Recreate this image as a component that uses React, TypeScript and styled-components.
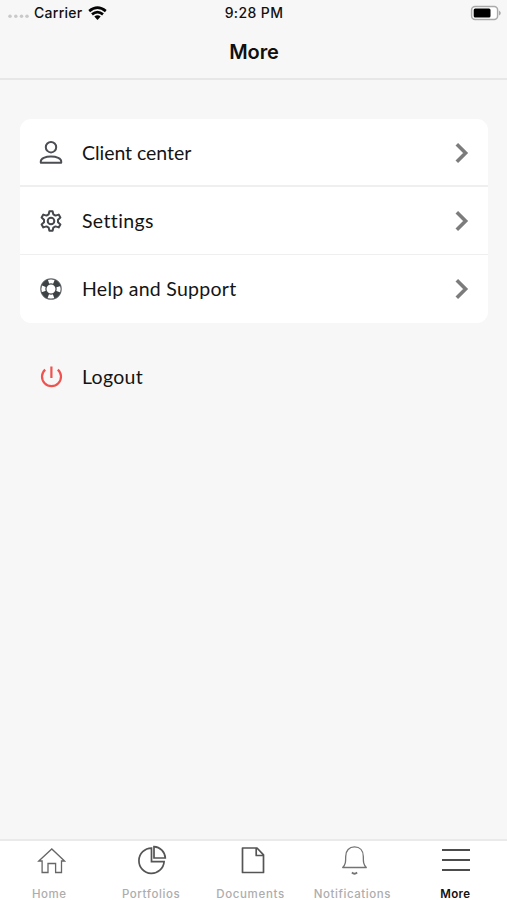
import React from 'react';
import styled, { createGlobalStyle } from 'styled-components';

const GlobalStyle = createGlobalStyle`
  * { box-sizing: border-box; }
  body { margin: 0; background: #f7f7f7; }
`;

const Screen = styled.div`
  width: 100%;
  max-width: 507px;
  height: 900px;
  display: flex;
  flex-direction: column;
  background: #f7f7f7;
  color: #111;
  font-family: Inter, sans-serif;
  overflow: hidden;
`;

const Header = styled.header`
  height: 80px;
  flex: none;
  border-bottom: 2px solid #e7e7e7;
`;

const StatusBar = styled.div`
  height: 26px;
  display: grid;
  grid-template-columns: 1fr auto 1fr;
  align-items: center;
  padding: 0 6px 0 8px;
  font-size: 14px;
  font-weight: 500;
  line-height: 26px;
`;

const Carrier = styled.div`
  display: flex;
  align-items: center;
  svg { display: block; }
`;

const CarrierName = styled.span`
  margin: 0 5px 0 5px;
  letter-spacing: 0.28px;
`;

const Time = styled.span`
  letter-spacing: 0.38px;
  margin-right: 1px;
`;

const Battery = styled.svg`
  justify-self: end;
  display: block;
`;

const Title = styled.h1`
  margin: 0;
  height: 52px;
  line-height: 53px;
  text-align: center;
  font-size: 20px;
  font-weight: 600;
  letter-spacing: -0.1px;
  padding-left: 1px;
  color: #101010;
`;

const Content = styled.main`
  flex: 1;
  padding: 39px 19px 0 20px;
`;

const Card = styled.div`
  border-radius: 11px;
  background: #fff;
  overflow: hidden;
`;

const Row = styled.div<{ $divider?: number }>`
  height: 68px;
  display: flex;
  align-items: center;
  padding: 0 18px;
  box-shadow: inset 0 -${(p) => p.$divider ?? 0}px #efefef;
  svg { display: block; flex: none; }
`;

const RowLabel = styled.span<{ $spacing: number }>`
  flex: 1;
  margin-left: 18px;
  font-family: Lato, sans-serif;
  font-size: 19.5px;
  line-height: 28px;
  letter-spacing: ${(p) => p.$spacing}px;
  color: #141414;
`;

const LogoutRow = styled(Row)`
  margin-top: 20px;
`;

const TabBar = styled.nav`
  height: 61px;
  flex: none;
  display: grid;
  grid-template-columns: repeat(5, 1fr);
  border-top: 2px solid #eaeaea;
  background: #fff;
`;

const Tab = styled.div`
  display: flex;
  flex-direction: column;
  align-items: center;
  svg { display: block; margin-top: 3px; }
`;

const TabLabel = styled.span<{ $active?: boolean; $spacing: number; $shift: number }>`
  margin-top: 10px;
  padding-right: ${(p) => p.$shift}px;
  font-size: 11.5px;
  line-height: 16px;
  font-weight: ${(p) => (p.$active ? 600 : 500)};
  letter-spacing: ${(p) => p.$spacing}px;
  color: ${(p) => (p.$active ? '#111' : '#adadad')};
`;

const SignalDots = () => (
  <svg width="21" height="10" viewBox="0 0 21 10" fill="#c9c9c9">
    {[2, 7.8, 13.5, 19].map((x) => <circle key={x} cx={x} cy="8.25" r="1.75" />)}
  </svg>
);

const Wifi = () => (
  <svg width="19" height="15" viewBox="0 0 19 15" fill="none" stroke="#050505" strokeWidth="2.7">
    <path d="M1.2 5.1Q9.5-1.7 17.8 5.1" />
    <path d="M4 8.4Q9.5 3.9 15 8.4" />
    <path d="M6.3 10.5Q9.5 8 12.7 10.5L9.5 14Z" fill="#050505" stroke="none" />
  </svg>
);

const UserIcon = () => (
  <svg width="26" height="26" viewBox="0 0 26 26" fill="none" stroke="#4b4e52" strokeWidth="2">
    <circle cx="13" cy="7.2" r="5.2" />
    <path d="M2.8 22.8v-1.5c0-2.700 4.500-4.700 10.200-4.700s10.200 2 10.200 4.700v1.500Z" strokeLinejoin="round" />
  </svg>
);

const GearIcon = () => (
  <svg width="26" height="26" viewBox="0 0 26 26" fill="none" stroke="#44484c" strokeWidth="2" strokeLinejoin="round">
    <path d="M11.4 3.2h3.2l.7 3.1 2.2 1.3 3.2-1 1.7 2.9-2.4 2.2v2.6l2.4 2.2-1.7 2.9-3.2-1-2.2 1.3-.7 3.1h-3.2l-.7-3.1-2.2-1.3-3.2 1-1.7-2.9L6 14.3v-2.6L3.6 9.5l1.7-2.9 3.2 1 2.2-1.3Z" />
    <circle cx="13" cy="13" r="3.3" />
  </svg>
);

const SupportIcon = () => (
  <svg width="26" height="26" viewBox="0 0 26 26" fill="none">
    <circle cx="13" cy="13" r="10.2" stroke="#666b6e" strokeWidth="1.2" />
    <circle cx="13" cy="13" r="7.6" stroke="#3d4245" strokeWidth="5" strokeDasharray="6.6 5.338" strokeDashoffset="-2.669" />
    <circle cx="13" cy="13" r="5.1" stroke="#3d4245" strokeWidth="1.2" />
  </svg>
);

const PowerIcon = () => (
  <svg width="26" height="26" viewBox="0 0 26 26" fill="none" stroke="#f0524f" strokeWidth="2.2">
    <path d="M7.2 5.6a9.5 9.5 0 1 0 12.6 0M13.4 2.5v11.5" />
  </svg>
);

const Chevron = () => (
  <svg width="17" height="24" viewBox="0 0 17 24" fill="none" stroke="#7c7c7c" strokeWidth="3.6">
    <path d="m3.8 3.2 8.8 8.8-8.8 8.8" />
  </svg>
);

const HomeIcon = () => (
  <svg width="30" height="32" viewBox="0 0 30 32" fill="none" stroke="#666" strokeWidth="1.3">
    <path d="M2.8 17 15.8 5 28.5 17H25.5V28.5H19.6V19.5H12V28.5H6.1V17Z" />
  </svg>
);

const PieIcon = () => (
  <svg width="30" height="32" viewBox="0 0 30 32" fill="none" stroke="#555" strokeWidth="1.7">
    <path d="M14.500 4.100a12.600 12.600 0 1 0 12.600 13.500H14.500Z" />
    <path d="M17 2.600V14H28.300A12 12 0 0 0 17 2.600Z" />
  </svg>
);

const DocumentIcon = () => (
  <svg width="30" height="32" viewBox="0 0 30 32" fill="none" stroke="#555" strokeWidth="1.7" strokeLinejoin="round">
    <path d="M4.500 4H19L25.500 10.800V28.500H4.500ZM18.200 4V11.500H25.500" />
  </svg>
);

const BellIcon = () => (
  <svg width="30" height="32" viewBox="0 0 30 32" fill="none" stroke="#737373" strokeWidth="1.3">
    <path d="M2.700 23.500C5.700 20.500 5.700 18 5.700 12.500c0-6 3.500-9.600 8.800-9.600s8.800 3.600 8.800 9.600c0 5.500 0 8 3 11Z" strokeLinejoin="round" />
    <path d="M11.900 28.500q2.600 2.400 5.200 0" strokeWidth="1.800" />
  </svg>
);

const MenuIcon = () => (
  <svg width="30" height="32" viewBox="0 0 30 32" fill="none" stroke="#4c4c4c" strokeWidth="1.8">
    <path d="M1 6h28M1 16h28M1 26h28" />
  </svg>
);

const items = [
  { label: 'Client center', icon: <UserIcon />, spacing: -0.05, divider: 2 },
  { label: 'Settings', icon: <GearIcon />, spacing: 0.35, divider: 1 },
  { label: 'Help and Support', icon: <SupportIcon />, spacing: 0.27, divider: 0 },
];

const tabs = [
  { label: 'Home', icon: <HomeIcon />, spacing: 0.5, shift: 3 },
  { label: 'Portfolios', icon: <PieIcon />, spacing: 0.6, shift: 2 },
  { label: 'Documents', icon: <DocumentIcon />, spacing: 0.65, shift: 6 },
  { label: 'Notifications', icon: <BellIcon />, spacing: 0.58, shift: 5 },
  { label: 'More', icon: <MenuIcon />, spacing: 0.35, shift: 2, active: true },
];

export default function App() {
  return (
    <Screen>
      <GlobalStyle />
      <Header>
        <StatusBar>
          <Carrier>
            <SignalDots />
            <CarrierName>Carrier</CarrierName>
            <Wifi />
          </Carrier>
          <Time>9:28 PM</Time>
          <Battery width="31" height="16" viewBox="0 0 31 16">
            <rect x="1.6" y="1.6" width="26" height="12.8" rx="3.5" fill="#fff" stroke="#aaa" strokeWidth="1.5" />
            <rect x="3.7" y="3.6" width="16.8" height="8.8" rx="1.5" fill="#000" />
            <path d="M29 5.5v5q1.8-1 1.8-2.5T29 5.5Z" fill="#aaa" />
          </Battery>
        </StatusBar>
        <Title>More</Title>
      </Header>
      <Content>
        <Card>
          {items.map((item) => (
            <Row key={item.label} $divider={item.divider}>
              {item.icon}
              <RowLabel $spacing={item.spacing}>{item.label}</RowLabel>
              <Chevron />
            </Row>
          ))}
        </Card>
        <LogoutRow>
          <PowerIcon />
          <RowLabel $spacing={0.3}>Logout</RowLabel>
        </LogoutRow>
      </Content>
      <TabBar>
        {tabs.map((tab) => (
          <Tab key={tab.label}>
            {tab.icon}
            <TabLabel $active={tab.active} $spacing={tab.spacing} $shift={tab.shift}>{tab.label}</TabLabel>
          </Tab>
        ))}
      </TabBar>
    </Screen>
  );
}
